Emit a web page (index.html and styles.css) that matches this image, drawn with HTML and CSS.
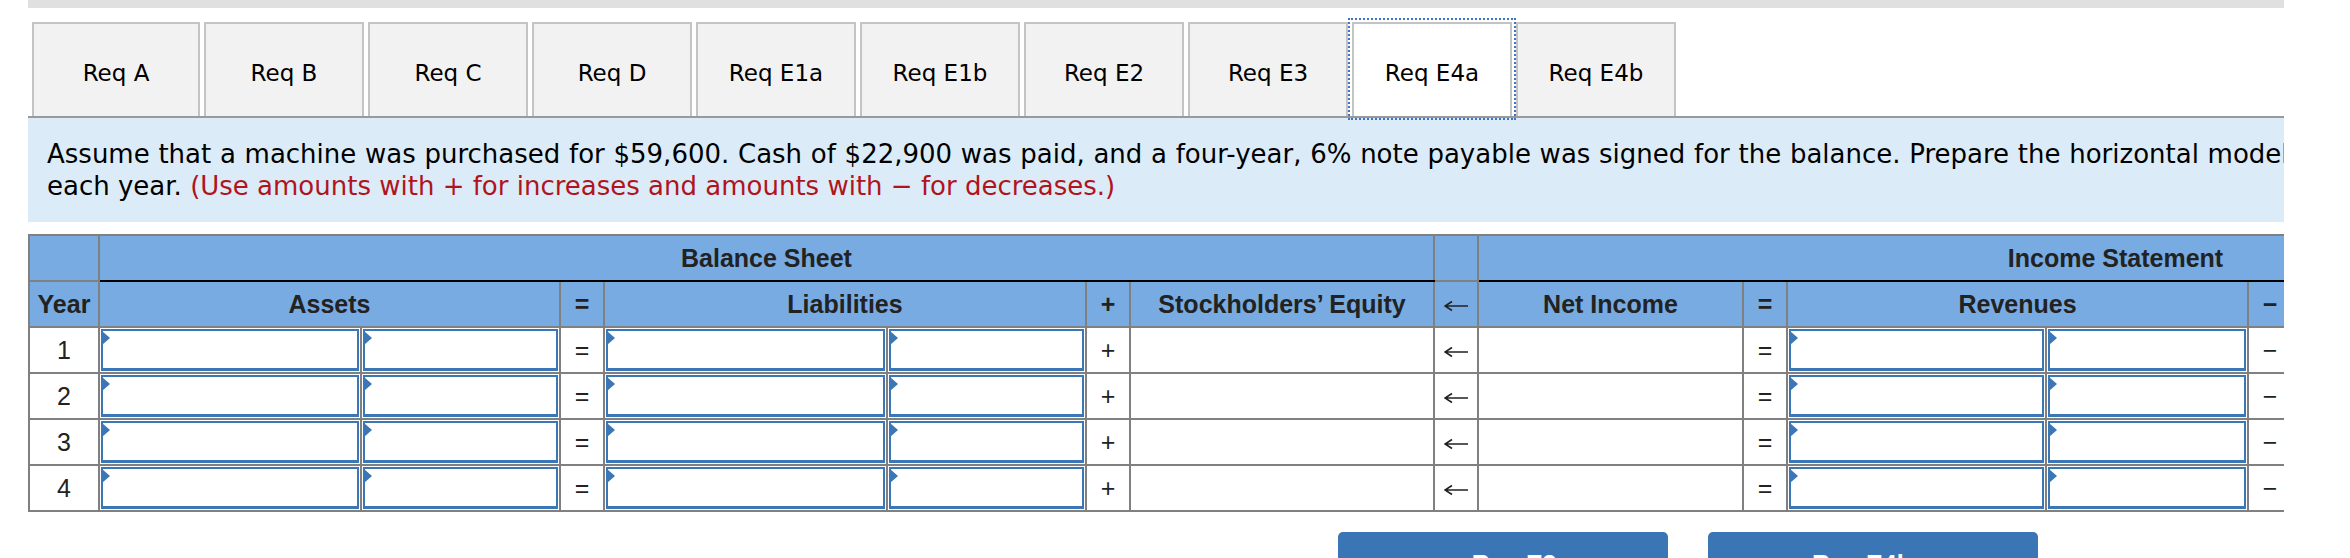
FILE: index.html
```html
<!DOCTYPE html>
<html>
<head>
<meta charset="utf-8">
<link rel="stylesheet" href="styles.css">
</head>
<body>
<div class="page">
  <div class="topbar"></div>
  <div class="tabs">
    <div class="tab first">Req A</div>
    <div class="tab">Req B</div>
    <div class="tab">Req C</div>
    <div class="tab">Req D</div>
    <div class="tab">Req E1a</div>
    <div class="tab">Req E1b</div>
    <div class="tab">Req E2</div>
    <div class="tab">Req E3</div>
    <div class="tab active">Req E4a</div>
    <div class="tab">Req E4b</div>
  </div>
  <div class="prompt">
    <p class="line">Assume that a machine was purchased for $59,600. Cash of $22,900 was paid, and a four-year, 6% note payable was signed for the balance. Prepare the horizontal model for</p>
    <p class="line">each year. <span class="hint">(Use amounts with + for increases and amounts with &minus; for decreases.)</span></p>
  </div>
  <table class="grid">
    <colgroup>
      <col class="c-year">
      <col class="c-a1"><col class="c-a2">
      <col class="c-op">
      <col class="c-l1"><col class="c-a2">
      <col class="c-op">
      <col class="c-se">
      <col class="c-op">
      <col class="c-ni">
      <col class="c-op">
      <col class="c-r1"><col class="c-r2">
      <col class="c-op">
      <col class="c-r1"><col class="c-r2">
    </colgroup>
    <thead>
      <tr>
        <th class="hd"></th>
        <th class="hd group" colspan="7">Balance Sheet</th>
        <th class="hd"></th>
        <th class="hd group" colspan="7">Income Statement</th>
      </tr>
      <tr>
        <th class="hd">Year</th>
        <th class="hd" colspan="2">Assets</th>
        <th class="hd">=</th>
        <th class="hd" colspan="2">Liabilities</th>
        <th class="hd">+</th>
        <th class="hd">Stockholders’ Equity</th>
        <th class="hd"><svg class="arr" viewBox="0 0 24 12" aria-label="←"><path d="M1 6H24M8 1.5L1 6L8 10.5"/></svg></th>
        <th class="hd">Net Income</th>
        <th class="hd">=</th>
        <th class="hd" colspan="2">Revenues</th>
        <th class="hd">&minus;</th>
        <th class="hd" colspan="2">Expenses</th>
      </tr>
    </thead>
    <tbody>
      <tr>
        <td class="num">1</td>
        <td class="in"><div class="box"></div></td><td class="in"><div class="box"></div></td>
        <td class="op">=</td>
        <td class="in"><div class="box"></div></td><td class="in"><div class="box"></div></td>
        <td class="op">+</td>
        <td></td>
        <td class="op"><svg class="arr" viewBox="0 0 24 12" aria-label="←"><path d="M1 6H24M8 1.5L1 6L8 10.5"/></svg></td>
        <td></td>
        <td class="op">=</td>
        <td class="in"><div class="box"></div></td><td class="in"><div class="box"></div></td>
        <td class="op">&minus;</td>
        <td class="in"><div class="box"></div></td><td class="in"><div class="box"></div></td>
      </tr>
      <tr>
        <td class="num">2</td>
        <td class="in"><div class="box"></div></td><td class="in"><div class="box"></div></td>
        <td class="op">=</td>
        <td class="in"><div class="box"></div></td><td class="in"><div class="box"></div></td>
        <td class="op">+</td>
        <td></td>
        <td class="op"><svg class="arr" viewBox="0 0 24 12" aria-label="←"><path d="M1 6H24M8 1.5L1 6L8 10.5"/></svg></td>
        <td></td>
        <td class="op">=</td>
        <td class="in"><div class="box"></div></td><td class="in"><div class="box"></div></td>
        <td class="op">&minus;</td>
        <td class="in"><div class="box"></div></td><td class="in"><div class="box"></div></td>
      </tr>
      <tr>
        <td class="num">3</td>
        <td class="in"><div class="box"></div></td><td class="in"><div class="box"></div></td>
        <td class="op">=</td>
        <td class="in"><div class="box"></div></td><td class="in"><div class="box"></div></td>
        <td class="op">+</td>
        <td></td>
        <td class="op"><svg class="arr" viewBox="0 0 24 12" aria-label="←"><path d="M1 6H24M8 1.5L1 6L8 10.5"/></svg></td>
        <td></td>
        <td class="op">=</td>
        <td class="in"><div class="box"></div></td><td class="in"><div class="box"></div></td>
        <td class="op">&minus;</td>
        <td class="in"><div class="box"></div></td><td class="in"><div class="box"></div></td>
      </tr>
      <tr>
        <td class="num">4</td>
        <td class="in"><div class="box"></div></td><td class="in"><div class="box"></div></td>
        <td class="op">=</td>
        <td class="in"><div class="box"></div></td><td class="in"><div class="box"></div></td>
        <td class="op">+</td>
        <td></td>
        <td class="op"><svg class="arr" viewBox="0 0 24 12" aria-label="←"><path d="M1 6H24M8 1.5L1 6L8 10.5"/></svg></td>
        <td></td>
        <td class="op">=</td>
        <td class="in"><div class="box"></div></td><td class="in"><div class="box"></div></td>
        <td class="op">&minus;</td>
        <td class="in"><div class="box"></div></td><td class="in"><div class="box"></div></td>
      </tr>
    </tbody>
  </table>
  <div class="nav">
    <button class="btn">&lsaquo;&nbsp; Req E3</button>
    <button class="btn">Req E4b &nbsp;&rsaquo;</button>
  </div>
</div>
</body>
</html>
```

FILE: styles.css
```css
html, body {
  margin: 0;
  padding: 0;
  background: #ffffff;
}

.page {
  width: 2256px;
  margin-left: 28px;
  overflow: hidden;
  height: 558px;
}

.topbar {
  height: 8px;
  background: #e0e0e0;
}

.tabs {
  display: flex;
  gap: 4px;
  padding: 14px 0 0 4px;
  border-bottom: 2px solid #9a9a9a;
}

.tab {
  box-sizing: border-box;
  width: 160px;
  height: 94px;
  border: 2px solid #c4c4c4;
  border-bottom: none;
  background: #f2f2f2;
  display: flex;
  align-items: center;
  justify-content: center;
  padding-top: 6px;
  font-family: "DejaVu Sans", Verdana, sans-serif;
  font-size: 23px;
  color: #000;
}

.tab.first {
  width: 168px;
}

.tab.active {
  background: #ffffff;
  outline: 2px dotted #3a74c2;
  outline-offset: 2px;
}

.prompt {
  background: #dbecf8;
  padding: 20px 0 20px 19px;
  overflow: hidden;
  white-space: nowrap;
  font-family: "DejaVu Sans", Verdana, sans-serif;
  font-size: 26px;
  line-height: 32px;
  color: #000;
}

.line {
  margin: 0;
}

.line:first-child {
  word-spacing: 0.45px;
}

.hint {
  color: #b0141d;
}

.grid {
  margin-top: 12px;
  border-collapse: collapse;
  table-layout: fixed;
  width: 2722px;
  font-family: "Liberation Sans", Arial, Helvetica, sans-serif;
  font-size: 25px;
  color: #222;
}

.c-year { width: 70px; }
.c-a1 { width: 262px; }
.c-a2 { width: 199px; }
.c-op { width: 44px; }
.c-l1 { width: 283px; }
.c-se { width: 304px; }
.c-ni { width: 265px; }
.c-r1 { width: 259px; }
.c-r2 { width: 202px; }

.grid th,
.grid td {
  border: 2px solid #808080;
  height: 44px;
  padding: 0;
  text-align: center;
  vertical-align: middle;
}

.grid th {
  background: #77abe1;
  font-weight: bold;
}

.grid th.group {
  border-bottom: 2px solid #000;
}

.grid td {
  background: #fff;
}

.grid td.in {
  height: 42px;
  padding: 1px;
}

.arr {
  display: block;
  width: 24px;
  height: 12px;
  margin: 4px auto 0;
  fill: none;
  stroke: #222;
  stroke-width: 1.6;
}

.box {
  position: relative;
  box-sizing: border-box;
  height: 42px;
  border: 2px solid #3b76b6;
  border-bottom-width: 3px;
  background: #fff;
}

.box::before {
  content: "";
  position: absolute;
  left: -1px;
  top: 0;
  border-left: 8px solid #3b76b6;
  border-top: 7px solid transparent;
  border-bottom: 7px solid transparent;
}

.nav {
  display: flex;
  gap: 40px;
  padding-left: 1310px;
  margin-top: 20px;
}

.btn {
  width: 330px;
  height: 70px;
  padding: 0 0 6px;
  border: 0;
  border-radius: 5px;
  background: #3a76b6;
  color: #fff;
  font-family: "Liberation Sans", Arial, sans-serif;
  font-size: 25px;
  font-weight: bold;
}
```
